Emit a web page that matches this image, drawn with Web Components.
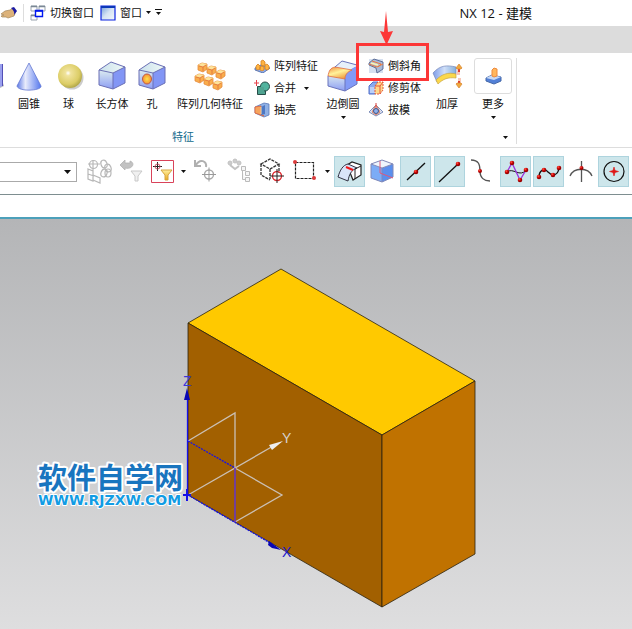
<!DOCTYPE html>
<html lang="zh-CN">
<head>
<meta charset="utf-8">
<title>NX 12 - 建模</title>
<style>
html,body{margin:0;height:100%}
body{font:11px/16px "Open Sans","Noto Sans CJK SC",sans-serif;color:#111;background:#fff;overflow:hidden}
</style>
</head>
<body>
<nx-app></nx-app>
<script>
const cube = `<path d="M3 10 15 2l14 5-12 6z" fill="url(#t)"/><path d="M3 10l14 3v16L3 25z" fill="url(#f)"/><path d="M17 13l12-6v16l-12 6z" fill="#8296f5"/><path d="M3 10 15 2l14 5v16l-12 6-14-4zl14 3 12-6M17 13v16" fill="none" stroke="#6a6fb4" stroke-width="1"/>`;
const defs = `<defs><linearGradient id="b"><stop stop-color="#5c79e6"/><stop offset=".35" stop-color="#e9ecfb"/><stop offset="1" stop-color="#5578ee"/></linearGradient>
<linearGradient id="t"><stop stop-color="#c9e0ec"/><stop offset="1" stop-color="#f0faf6"/></linearGradient>
<linearGradient id="f" x2="0" y2="1"><stop stop-color="#dcecf0"/><stop offset="1" stop-color="#8c9df3"/></linearGradient>
<linearGradient id="p"><stop stop-color="#7f9de8"/><stop offset=".5" stop-color="#cfdff8"/><stop offset="1" stop-color="#86b0dc"/></linearGradient>
<radialGradient id="s" cx=".42" cy=".38" r=".62"><stop stop-color="#fff"/><stop offset=".18" stop-color="#f0e39c"/><stop offset=".75" stop-color="#dccd66"/><stop offset="1" stop-color="#b4a94a"/></radialGradient>
<linearGradient id="o" x2="0" y2="1"><stop stop-color="#fff0a0"/><stop offset="1" stop-color="#eaa820"/></linearGradient>
<linearGradient id="e" x2=".6" y2="1"><stop stop-color="#f08a3c"/><stop offset=".5" stop-color="#fff29a"/><stop offset="1" stop-color="#ef9a3c"/></linearGradient>
<radialGradient id="h"><stop stop-color="#ffe14d"/><stop offset="1" stop-color="#f59232"/></radialGradient>
<radialGradient id="r" cx=".35" cy=".3"><stop stop-color="#ff6a50"/><stop offset=".5" stop-color="#e01010"/><stop offset="1" stop-color="#900"/></radialGradient></defs>`;
const mini = (x,y) => `<g transform="translate(${x} ${y})"><path d="M0 2l4-2 5 1v5l-4 3-5-2z" fill="#f9ad4c" stroke="#e58a3c" stroke-width=".8"/><path d="M0 2l4-2 5 1-4 3z" fill="#fde39a"/><path d="M5 4v4M1 3l4 1 3-2" stroke="#e06f3a" fill="none" stroke-width=".8"/></g>`;
const dot = (x,y,r=2.3) => `<circle cx="${x}" cy="${y}" r="${r}" fill="url(#r)"/>`;
const target = (x,y,c,k) => `<g fill="none"><circle cx="${x}" cy="${y}" r="4.500" stroke="${c}" stroke-width="1.400"/><path d="M${x-7} ${y}h14M${x} ${y-7}v14" stroke="${k}"/></g>`;
const icons = {
 hand:[17,12,`<path d="M1 7l4-3 5-1 3-2 3 3-2 5-6 2-2-1H2L1 9l3-1z" fill="#dcb27a" stroke="#a5875a" stroke-width=".7"/><path d="M11 1l3-1 3 4-3 4c1-3-1-5-3-7z" fill="#1c1ca4"/>`],
 windows:[16,16,`<g fill="#fff"><path d="M1 1h6v5H1zM9 1h6v5H9zM1 10h6v5H1z" stroke="#9aa4ae"/><path d="M1 1.500h6M9 1.500h6M1 10.500h6" stroke="#7a8794" stroke-width="1.300"/><path d="M5.500 5.500h7v6h-7z" stroke="#0018f0" stroke-width="1.400"/><path d="M5 6h8" stroke="#0018f0" stroke-width="1.600"/></g>`],
 window:[16,16,`<defs><linearGradient id="w" x2="1" y2="1"><stop stop-color="#6f9bd6"/><stop offset=".5" stop-color="#d5e3f3"/><stop offset="1" stop-color="#f4f8fc"/></linearGradient></defs><path d="M1 1h14v14H1z" fill="url(#w)" stroke="#0c24df" stroke-width="1.200"/><path d="M1 2h14" stroke="#0b37b8" stroke-width="2"/>`],
 cylinder:[9,32,`<path d="M0 23h3l1 3-4 2z" fill="#bbb"/><path d="M0 4h2.500v22L0 27z" fill="#9aa0ee"/><path d="M2.500 4v22" stroke="#5350b7" fill="none"/>`],
 cone:[32,32,`<path d="M16 3 28 26c1 5-23 6-24 0z" fill="url(#b)" stroke="#6478d2" stroke-width=".8"/>`],
 sphere:[32,32,`<circle cx="19" cy="18" r="11.500" fill="#ccc"/><circle cx="17" cy="16" r="12" fill="url(#s)"/>`],
 cube:[32,32,cube],
 hole:[32,32,cube+`<ellipse cx="11" cy="19" rx="4.500" ry="5" fill="url(#h)" stroke="#c05848"/>`],
 pattern:[32,32,mini(4,3)+mini(13,6)+mini(22,10)+mini(1,14)+mini(10,17)+mini(19,21)],
 blend:[32,32,`<path d="M1 15c4-2 7 1 11 3l6 1v12L1 26z" fill="url(#f)"/><path d="M18 17c1-5 3-8 12-11v18l-12 7z" fill="#829af7"/><path d="M8 7 15 1l15 4-7 5z" fill="#e6f0fa"/><path d="M1 16C2 11 3 8 8 7l17 3c-5 2-7 5-7 9z" fill="url(#e)" stroke="#df6b41" stroke-width=".8"/><path d="M1 16v10l17 5 12-7V5L15 1 8 7M18 19v12" fill="none" stroke="#6a74bc"/>`],
 thicken:[32,32,`<path d="M2 13C9 5 16 5 25 7v8c-8-2-13 1-19 7z" fill="url(#p)" stroke="#7587b8" stroke-width=".7"/><path d="M5 20c6-6 12-8 20-6v4c-8-1-13 1-18 6z" fill="#fbd84a" stroke="#c9a541" stroke-width=".7"/><path d="M27 8h2v7h-4zM27 18h3v7h-3z" fill="#f8c8b8"/><path d="M27 7h2v5h-2zM27 21h2v4h-2z" fill="#dd3c30"/><path d="M25 8l3-4 3 4-1 1h-4zM25 24l3 4 3-4-1-1h-4z" fill="#f0aa3e" stroke="#d98330" stroke-width=".7"/>`],
 more:[18,18,`<path d="M2 11l6-3 9 2v4l-7 3-8-3z" fill="#5280d7" stroke="#4468a8"/><path d="M2 11l6-3 9 2-7 3z" fill="#c7d9f6"/><path d="M8 3l2-2 3 1v7l-3 1-2-1z" fill="#ffb65d" stroke="#ee8a3c"/>`],
 array:[16,14,`<path d="M1 9l6-3 9 3-7 5-8-3z" fill="#8caff3" stroke="#4462a3" stroke-width=".8"/><g fill="#ffb443" stroke="#d68322" stroke-width=".8"><path d="M2 7l2-2 2 2v3l-2 1-2-1zM7 2l2-1 2 2v3L9 7 7 6zM11 6l2-1 2 2v3l-2 1-2-1zM6 8l2-1 2 1v3l-2 1-2-1z"/></g>`],
 unite:[16,16,`<path d="M3.500 6.500h8v8h-8z" fill="#50a391" stroke="#284e49"/><circle cx="11" cy="6.500" r="4.500" fill="#50b39e" stroke="#284e49"/><path d="M4 7h6v6H4z" fill="#50a391"/><path d="M0 3h5M2.500 0v6" stroke="#e5404a"/>`],
 shell:[16,16,`<path d="M1 5 10 1l5 1v11l-5 2-9-4z" fill="#8fb0e4" stroke="#5a78b8" stroke-width=".8"/><path d="M1 5l6-1v8l3 2-9-3z" fill="#f5a45e" stroke="#e36338" stroke-width=".8"/><path d="M7 5l4-2v9l-4 1z" fill="#4d78c4"/><path d="M7 5v7" stroke="#f6dfb0"/>`],
 chamfer:[16,16,`<path d="M1 1h14v14H1z" fill="#d6e0f0"/><path d="M1 5 6 1l9 3v7l-6 4-1-5-7-3z" fill="#a9b9d6" stroke="#536590" stroke-width=".9"/><path d="M1 6l8 3 6-3M4 3l9 3-3 3" fill="none" stroke="#ed7a3c"/><path d="M3 5l7 2" stroke="#fff5ad" stroke-width="1.500"/>`],
 trim:[16,14,`<path d="M1 5 5 1h5v9l-3 3H1z" fill="#88aaf0" stroke="#536fc8"/><path d="M2 6h5v6H2z" fill="#bcd0f8"/><path d="M7 5l3-4h5v8l-3 4H7z" fill="#ffd98a" stroke="#e4563c" stroke-dasharray="2 1"/><path d="M7 5h5v8M12 5l3-4" fill="none" stroke="#e4563c"/>`],
 draft:[16,14,`<path d="M1 9 8 2l7 7-7 4z" fill="#dbe5f8" stroke="#7d8db8"/><path d="M8 2 4 9l4 3 4-3z" fill="#fff0e4" stroke="#dd7f62"/><circle cx="8" cy="8" r="2.500" fill="#8fb2ec" stroke="#3c5088"/><path d="M8 0v5" stroke="#d64040"/>`],
 link:[31,31,`<g fill="none" stroke="#b8b8b8" stroke-width="1.200"><path d="M4 13l5 2v10l-5-2zM9 19l7 3v5l-7-3M9 4v20M4 8h12M4 18l6 2"/><circle cx="9.500" cy="8.500" r="4"/><ellipse cx="20" cy="8" rx="3" ry="4" transform="rotate(-20 20 8)"/><ellipse cx="24" cy="12" rx="3" ry="4" transform="rotate(-20 24 12)"/><ellipse cx="20" cy="17" rx="3" ry="4" transform="rotate(20 20 17)"/><ellipse cx="24" cy="17" rx="3" ry="4"/></g>`],
 backfilter:[31,31,`<path d="M4 9l5-5v3h5V5c6 2 2 9-5 7v2z" fill="#c2c2c2" stroke="#b2b2b2" stroke-width=".8"/><path d="M15 15h11l-4 5v5h-3v-5z" fill="#f0f0f0" stroke="#c8c8c8"/>`],
 filter:[31,31,`<path d="M4.500 4.500h22v22h-22z" fill="#fff" stroke="#d9435a"/><path d="M6 10.500h9M10.500 6v9" stroke="#222"/><circle cx="10.500" cy="10.500" r="2.500" fill="none" stroke="#d2556a"/><path d="M14 14h11l-4 5v5h-3v-5z" fill="url(#o)" stroke="#d6a440"/>`],
 undo:[31,31,`<path d="M5 9c4-7 11-4 10 2M4 4v6h6" fill="none" stroke="#b0b0b0" stroke-width="2"/>`+target(18,18.5,'#aaa','#999')],
 tree:[31,31,`<g fill="#ccc" stroke="#c2c2c2"><circle cx="6" cy="7" r="2"/><circle cx="11" cy="5" r="2"/><circle cx="15" cy="7" r="2"/><path d="M6 9l5 4 4-3" fill="none" stroke-width="2"/></g><g fill="#f5f5f5" stroke="#bbb"><path d="M17.500 10.500h4v4h-4zM21.500 15.500h4v4h-4zM21.500 21.500h4v4h-4zM18.500 14.500v9h3"/></g>`],
 boxtarget:[31,31,`<path d="M4 8l9-5 9 5-9 5zM4 8v11l9 5M22 8v9M13 13v10" fill="none" stroke="#333" stroke-width="1.300" stroke-dasharray="3 1"/>`+target(20,20,'#df2c32','#222')],
 region:[31,31,`<path d="M6.500 6.500h18v16h-18z" fill="none" stroke="#222" stroke-width="1.200" stroke-dasharray="3 1"/><circle cx="6" cy="6" r="2" fill="#db3b3b"/><circle cx="25" cy="22" r="2" fill="#db3b3b"/>`],
 face:[31,31,`<path d="M13 9l5-3 9 3v10l-8 5z" fill="#fff" stroke="#222" stroke-width="1.200"/><path d="M4 21C6 14 9 9 14 8l9 4c-6 2-8 7-9 13z" fill="#d9e4f9" stroke="#334"/><path d="M21 13v10M21 13l6-3" fill="none" stroke="#222"/><path d="M12 11l7 3" stroke="#f01818" stroke-width="2"/>`],
 section:[31,31,`<path d="M4 8l11 4v14L4 22z" fill="#7cacf6"/><path d="M15 12l11-4v13l-11 5z" fill="#5a8fee"/><path d="M4 8l11-4 11 4-11 4z" fill="#eef5fd"/><path d="M4 8l11-4 11 4v13l-11 5-11-4zl11 4 11-4M15 12v14" stroke="#8088b8" fill="none"/><path d="M13 5v12l13 5" stroke="#e05878" fill="none"/>`],
 mid:[31,31,`<path d="M7 24 25 7" stroke="#111" stroke-width="1.300"/>`+dot(16,16)],
 end:[31,31,`<path d="M5 26 24 8" stroke="#111" stroke-width="1.300"/>`+dot(24,8)],
 quadrant:[31,31,`<path d="M4 4c8 0 9 5 9 11 0 7 4 10 10 10" fill="none" stroke="#555" stroke-width="1.300"/>`+dot(13,15,2)],
 poles:[31,31,`<path d="M7 16c6-5 13 6 19-2" fill="none" stroke="#111"/><path d="M7 16 12 7l8 17 6-10" fill="none" stroke="#9a35dc" stroke-width="1.300"/>`+dot(7,16)+dot(12,7)+dot(20,24)+dot(26,14)],
 spline:[31,31,`<path d="M6 21c0-6 5-10 9-5 5 5 10 3 11-4" fill="none" stroke="#111" stroke-width="1.300"/>`+dot(6,21)+dot(11,14)+dot(20,19)+dot(26,12)],
 intersect:[31,31,`<path d="M4 20c4-9 18-9 22 0M15.500 5v21" fill="none" stroke="#555" stroke-width="1.300"/>`+dot(15.5,12,2)],
 center:[31,31,`<circle cx="16" cy="15.500" r="10" fill="none" stroke="#111" stroke-width="1.200"/><path d="M16 11l1 3.500 3.500 1-3.500 1-1 3.500-1-3.500-3.500-1 3.500-1z" fill="#df1515" stroke="#df1515" stroke-width=".6"/>`],
 down:[5,3,`<path d="M0 0h5L2.500 3z" fill="#111"/>`],
 dropdown:[7,4,`<path d="M0 0h7L3.500 4z" fill="#111"/>`],
 overflow:[7,7,`<path d="M0 .5h7" stroke="#111"/><path d="M1 3h5L3.500 6z" fill="#111"/>`]
};
class Base extends HTMLElement{
  connectedCallback(){ if(!this.shadowRoot) this.attachShadow({mode:'open'}).innerHTML=this.render(); }
}
const reset = `button{font:inherit;color:inherit;background:none;border:0;padding:0;margin:0;display:flex;align-items:center}`;
customElements.define('nx-icon', class extends Base{
  render(){const [w,h,s]=icons[this.getAttribute('name')];
   return `<style>:host{display:block;flex:none}svg{display:block}</style><svg width="${w}" height="${h}" viewBox="0 0 ${w} ${h}" aria-hidden="true">${defs}${s}</svg>`}
});
/* Large ribbon command: icon above, label below, optional menu arrow */
customElements.define('nx-command', class extends Base{
  render(){const i=this.getAttribute('icon');return `<style>${reset}:host{display:block}
   button{flex-direction:column;width:100%;white-space:nowrap}
   .pic{height:36px;display:grid;place-items:center}.pic.framed{box-sizing:border-box;width:38px;border:1px solid #ddd;border-radius:3px}
   span{line-height:16px;margin-top:2px}.menu{margin-top:4px}</style>
   <button type="button"><div class="pic ${this.hasAttribute('framed')?'framed':''}"><nx-icon name="${i}"></nx-icon></div><span><slot></slot></span>${this.hasAttribute('menu')?'<nx-icon class="menu" name="down"></nx-icon>':''}</button>`}
});
/* Compact command: icon beside its label */
customElements.define('nx-item', class extends Base{
  render(){return `<style>${reset}:host{display:block}button{gap:4px;height:22px;white-space:nowrap}.menu{margin-left:4px}:host([tight]) .menu{margin-left:0}</style>
   <button type="button"><nx-icon name="${this.getAttribute('icon')}"></nx-icon><slot></slot>${this.hasAttribute('menu')?'<nx-icon class="menu" name="down"></nx-icon>':''}</button>`}
});
customElements.define('nx-tool', class extends Base{
  render(){return `<style>${reset}:host{display:grid;place-items:center}
   button{justify-content:center}:host([active]) button{background:#cde6eb;box-shadow:inset 0 0 0 1px #aed4de}</style>
   <button type="button" aria-label="${this.getAttribute('label')}"><nx-icon name="${this.getAttribute('icon')}"></nx-icon></button>`}
});
customElements.define('nx-titlebar', class extends Base{
  render(){return `<style>:host{display:flex;align-items:center;height:25px;padding-bottom:1px}.quick{display:flex;align-items:center;gap:6px;flex:1}
   .rule{width:1px;height:18px;background:#ddd}.end{margin-left:-2px}h1{font-size:13px;font-weight:400;margin:0;padding-right:100px}</style>
   <div class="quick"><nx-icon name="hand"></nx-icon><span class="rule"></span>
   <nx-item icon="windows">切换窗口</nx-item><nx-item icon="window" menu tight>窗口</nx-item><nx-icon class="end" name="overflow"></nx-icon></div><h1>NX 12 - 建模</h1>`}
});
customElements.define('nx-ribbon', class extends Base{
  render(){return `<style>:host{display:block;border-top:27px solid #dcdcdc;border-bottom:1px solid #ddd;position:relative}
   .group{width:516px;border-right:1px solid #ddd;margin:5px 0 3px;height:86px;display:grid;grid-template-rows:1fr 14px}
   .cmds{display:grid;grid-template-columns:9px 40px 39px 48px 32px 84px 2px 72px 34px 8px 62px 34px 10px 38px;align-items:start}
   .col{margin-top:-3px}.cyl{margin-top:2px}
   .foot{display:flex;align-items:center;color:#126a8c;padding:0 8px 0 172px;justify-content:space-between}
   .callout{position:absolute;left:356px;top:-10px;width:67px;height:32px;border:3px solid #fc3737}
   .arrow{position:absolute;left:380px;top:-42px}</style>
   <div class="group"><div class="cmds"><nx-icon class="cyl" name="cylinder"></nx-icon>
   <nx-command icon="cone">圆锥</nx-command><nx-command icon="sphere">球</nx-command><nx-command icon="cube">长方体</nx-command><nx-command icon="hole">孔</nx-command><nx-command icon="pattern">阵列几何特征</nx-command><i></i>
   <div class="col"><nx-item icon="array">阵列特征</nx-item><nx-item icon="unite" menu>合并</nx-item><nx-item icon="shell">抽壳</nx-item></div>
   <nx-command icon="blend" menu>边倒圆</nx-command><i></i>
   <div class="col"><nx-item icon="chamfer">倒斜角</nx-item><nx-item icon="trim">修剪体</nx-item><nx-item icon="draft">拔模</nx-item></div>
   <nx-command icon="thicken">加厚</nx-command><i></i><nx-command icon="more" framed menu>更多</nx-command></div>
   <div class="foot"><span>特征</span><nx-icon name="down"></nx-icon></div></div>
   <div class="callout"></div><svg class="arrow" width="13" height="34" aria-hidden="true"><path d="M6 0 8 21l5-1-6.500 14L0 20l4 1z" fill="#fc3737"/></svg>`}
});
customElements.define('nx-selectionbar', class extends Base{
  render(){const t=[['link','WCS 链接'],['backfilter','重置过滤器'],['filter','过滤器'],['down','过滤器选项'],['undo','取消选择'],['tree','导航器'],['boxtarget','选择对象'],['region','矩形选择'],['down','选择选项'],['face','面',1],['section','截面'],['mid','中点',1],['end','端点',1],['quadrant','控制点'],['poles','极点',1],['spline','样条点',1],['intersect','交点'],['center','圆心',1]];
   return `<style>:host{display:grid;height:47px;padding-top:1px;box-sizing:border-box;align-items:center;border-bottom:1px solid #7e8e90;grid-template-columns:82px 34px 31px 30px 13px 32px 34px 32px 33px 12px 33px 33px 33px 34px 33px 32px 34px 32px 33px}
   .combo{display:grid;width:77px;align-items:center}.combo>*{grid-area:1/1}select{appearance:none;width:100%;height:20px;border:1px solid #aaa;border-left:0;background:#fff;border-radius:0}
   .combo nx-icon{justify-self:end;margin-right:6px;pointer-events:none}</style>
   <div class="combo"><select aria-label="选择范围"><option></option></select><nx-icon name="dropdown"></nx-icon></div>`+t.map(([i,l,a])=>`<nx-tool icon="${i}" label="${l}" ${a?'active':''}></nx-tool>`).join('')}
});
customElements.define('nx-viewport', class extends Base{
  render(){return `<style>:host{display:block;flex:1;min-height:0;border-top:2px solid #4ca0ba;background:linear-gradient(#b4b5b7,#dededf);overflow:hidden}
   svg{display:block}.cn{font:700 29px "Liberation Sans","Noto Sans CJK SC",sans-serif}.url{font:700 14px "DejaVu Sans",sans-serif}.ax{font:14px "Liberation Sans",sans-serif}</style>
   <svg width="632" height="410" viewBox="0 219 632 410">
   <g stroke="#29220f" stroke-width=".8"><path d="M281 269 475 381 382 435 188 323z" fill="#ffc900"/><path d="M188 323 382 435V607L188 495z" fill="#a26000"/><path d="M382 435l93-54v173l-93 53z" fill="#c07200"/></g>
   <g fill="none" stroke="#cbc0b5" stroke-width="1.300"><path d="M188 441 235 413V468M188 495 275 445M235 468l47 27-47 27"/></g>
   <g fill="none" stroke="#1611e8" stroke-width="1.300"><path d="M187.500 495V398"/><path d="M183 495h8M187 489v12" stroke-width="2"/><path d="M188 441 235 468M188 495 272 544" stroke-dasharray="2 1"/><path d="M235 468v54" stroke="#6738be" stroke-width="1.600"/></g>
   <path d="M187 388l-3 12h6zM281 550l-12-9-1 4 4 3z" fill="#0906b5"/><path d="M283 441l-14 4 3 5z" fill="#eee"/>
   <g class="ax"><text x="183" y="386" fill="#3c35db">Z</text><text x="282" y="557" fill="#2018ca">X</text><text x="282" y="443" fill="#d6d2ce">Y</text></g>
   <g stroke="#fff" stroke-linejoin="round" paint-order="stroke"><text class="cn" x="38" y="489" stroke-width="4" fill="#1975bf">软件自学网</text><text class="url" x="38" y="505" stroke-width="2" fill="#129ce4">WWW.RJZXW.COM</text></g>
   </svg>`}
});
customElements.define('nx-app', class extends Base{
  render(){return `<style>:host{display:flex;flex-direction:column;height:100%}.prompt{height:22px}</style>
   <nx-titlebar></nx-titlebar><nx-ribbon></nx-ribbon><nx-selectionbar></nx-selectionbar><div class="prompt"></div><nx-viewport></nx-viewport>`}
});
</script>
</body>
</html>
